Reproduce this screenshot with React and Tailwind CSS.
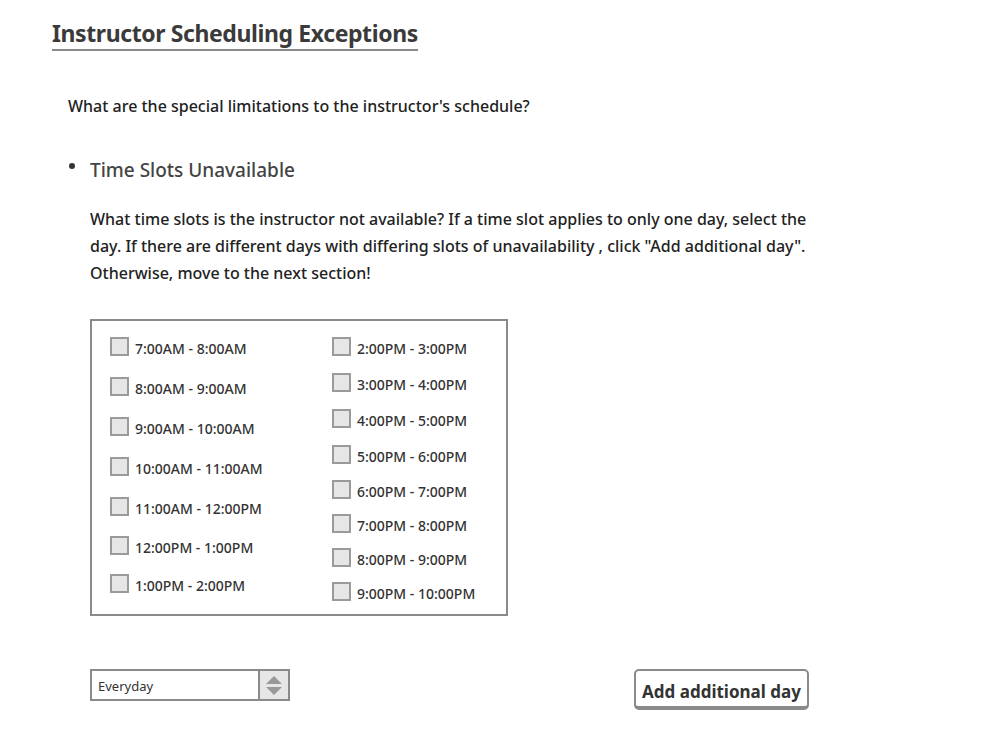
import React from "react";

const left = [
  "7:00AM - 8:00AM",
  "8:00AM - 9:00AM",
  "9:00AM - 10:00AM",
  "10:00AM - 11:00AM",
  "11:00AM - 12:00PM",
  "12:00PM - 1:00PM",
  "1:00PM - 2:00PM",
];
const right = [
  "2:00PM - 3:00PM",
  "3:00PM - 4:00PM",
  "4:00PM - 5:00PM",
  "5:00PM - 6:00PM",
  "6:00PM - 7:00PM",
  "7:00PM - 8:00PM",
  "8:00PM - 9:00PM",
  "9:00PM - 10:00PM",
];

function Slot({ label }) {
  return (
    <div className="flex items-start">
      <div className="w-[19px] h-[19px] border-2 border-[#9a9a9a] bg-[#e6e6e6] shrink-0" />
      <span className="ml-[6px] mt-[3px] text-[14px] leading-[18px] text-[#333] font-medium">
        {label}
      </span>
    </div>
  );
}

export default function App() {
  return (
    <div
      className="w-[1000px] h-[747px] bg-white text-[#222] pl-[52px] pt-[18px]"
      style={{ fontFamily: '"Noto Sans", "Open Sans", sans-serif' }}
    >
      <div className="inline-block border-b-2 border-[#8a8a8a] pb-[1px]">
        <h1 className="text-[23px] leading-[30px] font-bold text-[#3a3a3a] tracking-[-0.4px]">
          Instructor Scheduling Exceptions
        </h1>
      </div>

      <p className="ml-[16px] mt-[44px] text-[16px] leading-[22px] font-medium text-[#222]">
        What are the special limitations to the instructor's schedule?
      </p>

      <div className="ml-[16px] mt-[40px] flex items-center">
        <span className="w-[6px] h-[6px] rounded-full bg-[#333] mb-[8px] ml-[1px]" />
        <span className="ml-[15px] text-[19px] leading-[26px] font-medium text-[#444]">
          Time Slots Unavailable
        </span>
      </div>

      <p className="ml-[38px] mt-[23px] text-[16px] leading-[27px] font-medium text-[#222]">
        What time slots is the instructor not available? If a time slot applies to only one day, select the
        <br />
        day. If there are different days with differing slots of unavailability , click "Add additional day".
        <br />
        Otherwise, move to the next section!
      </p>

      <div className="ml-[38px] mt-[32px] w-[418px] h-[297px] border-2 border-[#8a8a8a] flex pt-[16px] pl-[18px]">
        <div className="w-[222px] flex flex-col gap-[19px]">
          {left.map((l, i) => (
            <div key={l} className={i === 5 ? "-mt-[1px]" : i === 6 ? "-mt-[2px]" : ""}>
              <Slot label={l} />
            </div>
          ))}
        </div>
        <div className="flex flex-col gap-[15px]">
          {right.map((l, i) => (
            <div key={l} className={i >= 5 ? "-mt-[2px]" : i === 4 ? "-mt-[1px]" : ""}>
              <Slot label={l} />
            </div>
          ))}
        </div>
      </div>

      <div className="ml-[38px] mt-[53px] flex items-start justify-between w-[719px]">
        <div className="w-[200px] h-[32px] border-2 border-[#8a8a8a] flex">
          <div className="flex-1 flex items-center pl-[6px] pt-[3px] text-[13px] text-[#333]">
            Everyday
          </div>
          <div className="w-[30px] bg-[#e6e6e6] border-l-2 border-[#8a8a8a] flex flex-col items-center justify-center gap-[3px]">
            <svg width="16" height="8" viewBox="0 0 16 8">
              <polygon points="8,0 16,8 0,8" fill="#999" />
            </svg>
            <svg width="16" height="8" viewBox="0 0 16 8">
              <polygon points="0,0 16,0 8,8" fill="#999" />
            </svg>
          </div>
        </div>
        <button className="w-[175px] h-[41px] rounded-[5px] border-2 border-b-[4px] border-[#8a8a8a] bg-white text-[17px] font-bold text-[#333] flex items-center justify-center pt-[6px]">
          Add additional day
        </button>
      </div>
    </div>
  );
}
